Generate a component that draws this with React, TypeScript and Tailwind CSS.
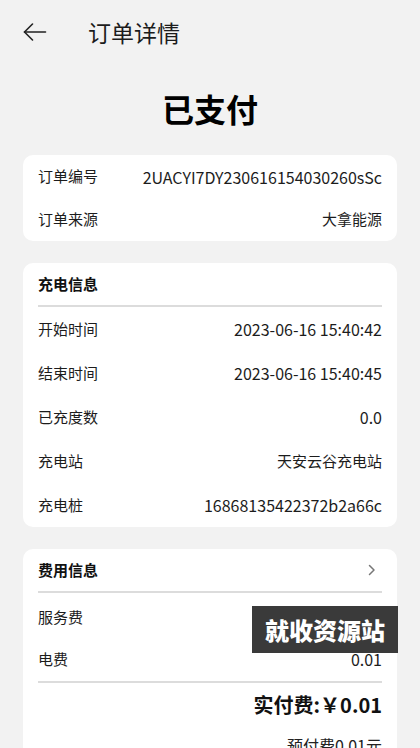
const font = { fontFamily: '"Noto Sans CJK SC", "Noto Sans", sans-serif' };

interface Row {
  label: string;
  value: string;
  cjk?: boolean;
}

const orderRows: Row[] = [
  { label: "订单编号", value: "2UACYI7DY230616154030260sSc" },
  { label: "订单来源", value: "大拿能源", cjk: true },
];

const chargeRows: Row[] = [
  { label: "开始时间", value: "2023-06-16 15:40:42" },
  { label: "结束时间", value: "2023-06-16 15:40:45" },
  { label: "已充度数", value: "0.0" },
  { label: "充电站", value: "天安云谷充电站", cjk: true },
  { label: "充电桩", value: "16868135422372b2a66c" },
];

const InfoRow = ({ label, value, cjk, h = "h-[44px]" }: Row & { h?: string }) => (
  <div className={`flex items-center justify-between ${h} text-[15px] text-[#1c1c1c]`}>
    <span>{label}</span>
    <span className={cjk ? "text-[15px]" : "text-[16px]"}>{value}</span>
  </div>
);

const Divider = () => <div className="h-[2px] bg-[#dcdcdc]" />;

export default function App() {
  return (
    <div className="relative h-[748px] w-[420px] overflow-hidden bg-[#f2f2f2]" style={font}>
      {/* header */}
      <div className="flex h-[64px] items-center">
        <div className="ml-[23px] flex w-[24px] items-center">
          <svg width="24" height="18" viewBox="0 0 24 18" fill="none" stroke="#222" strokeWidth="1.6" strokeLinecap="round" strokeLinejoin="round">
            <path d="M22.5 9H1.5" />
            <path d="M9.5 1L1.5 9L9.5 17" />
          </svg>
        </div>
        <h1 className="ml-[41px] text-[23px] text-[#1c1c1c]">订单详情</h1>
      </div>

      <div className="flex h-[91px] items-center justify-center pb-[3px]">
        <span className="text-[32px] font-bold text-black">已支付</span>
      </div>

      {/* order */}
      <div className="mx-[23px] rounded-[10px] bg-white px-[15px]">
        {orderRows.map((r) => (
          <InfoRow key={r.label} {...r} h="h-[43px]" />
        ))}
      </div>

      {/* charge info */}
      <div className="mx-[23px] mt-[22px] rounded-[10px] bg-white px-[15px]">
        <div className="flex h-[42px] items-center text-[15px] font-bold text-[#111]">充电信息</div>
        <Divider />
        {chargeRows.map((r) => (
          <InfoRow key={r.label} {...r} />
        ))}
      </div>

      {/* fee info */}
      <div className="mx-[23px] mt-[22px] rounded-[10px] bg-white px-[15px] pb-4">
        <div className="flex h-[42px] items-center justify-between text-[15px] font-bold text-[#111]">
          <span>费用信息</span>
          <svg width="8" height="12" viewBox="0 0 8 12" fill="none" stroke="#777" strokeWidth="1.5" strokeLinecap="round" strokeLinejoin="round" className="mr-[6px]">
            <path d="M1.5 1.5L6 6L1.5 10.5" />
          </svg>
        </div>
        <Divider />
        <div className="flex h-[44px] items-center pt-[4px] text-[15px] text-[#1c1c1c]">服务费</div>
        <InfoRow label="电费" value="0.01" />
        <Divider />
        <div className="flex h-[44px] items-center justify-end text-[20px] font-bold text-[#111]">实付费:￥0.01</div>
        <div className="flex h-[36px] items-center justify-end text-[16px] text-[#222]">预付费0.01元</div>
      </div>

      {/* watermark */}
      <div className="absolute left-[252px] top-[606px] flex h-[47px] w-[146px] items-center justify-center bg-[#3a3a3a]">
        <span className="text-[24px] font-black text-white">就收资源站</span>
      </div>
    </div>
  );
}
